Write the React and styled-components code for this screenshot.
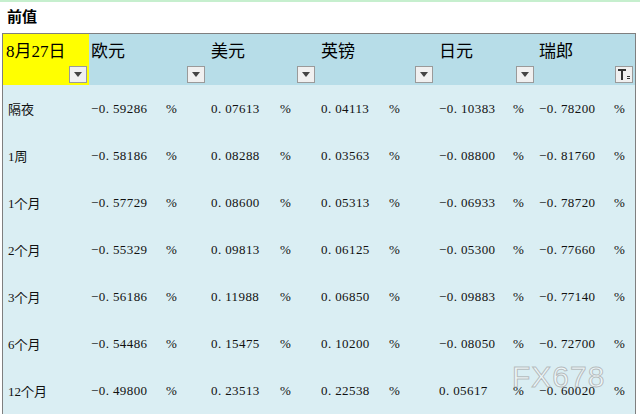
import React from 'react';
import styled, { createGlobalStyle } from 'styled-components';

const Global = createGlobalStyle`
  body { margin: 0; background: #fff; font-family: "Liberation Serif", "Noto Sans CJK JP", serif; }
`;

const Page = styled.div`
  width: 640px;
  height: 414px;
  border-top: 2px solid #c6efce;
  box-sizing: border-box;
  position: relative;
`;

const Title = styled.div`
  height: 31px;
  padding-left: 7px;
  font-size: 15px;
  font-weight: bold;
  line-height: 31px;
  font-family: "Liberation Serif", "Noto Sans CJK SC", serif;
`;

const Table = styled.div`
  margin-left: 2px;
  width: 632px;
  border: 1px solid #7f7f7f;
  display: grid;
  grid-template-columns: 86px 118px 110px 118px 101px 1fr;
  background: #daeef3;
`;

const Head = styled.div`
  height: 51px;
  background: ${p => (p.$first ? '#ffff00' : '#b7dde8')};
  position: relative;
  padding: 3px 0 0 ${p => (p.$first ? 3 : p.$indent || 2)}px;
  box-sizing: border-box;
  font-size: 17px;
  font-family: "Liberation Serif", "Noto Sans CJK JP", serif;
`;

const Drop = styled.div`
  position: absolute;
  right: 2px;
  bottom: 2px;
  width: 16px;
  height: 15px;
  border: 1px solid #9a9a9a;
  background: #f0f0f0;
  display: flex;
  align-items: center;
  justify-content: center;
`;

const Cell = styled.div`
  height: 47px;
  display: flex;
  align-items: center;
  padding-left: ${p => p.$pad || 2}px;
  font-size: 13px;
  font-family: "Liberation Serif", "Noto Sans CJK JP", serif;
  white-space: pre;
  color: #111;
`;

const Num = styled.span`
  width: ${p => p.$w}px;
  letter-spacing: 0.4px;
`;

const Mark = styled.div`
  position: absolute;
  left: 512px;
  top: 358px;
  font-family: "Liberation Sans", sans-serif;
  font-size: 30px;
  color: rgba(255,255,255,0.55);
  -webkit-text-stroke: 1px rgba(150,150,150,0.6);
  letter-spacing: 1px;
`;

const cols = [
  { name: '欧元', indent: 2, w: 75 },
  { name: '美元', indent: 4, w: 69 },
  { name: '英镑', indent: 4, w: 68 },
  { name: '日元', indent: 4, w: 74 },
  { name: '瑞郎', indent: 3, w: 75 },
];

const rows = [
  ['隔夜', '−0. 59286', '0. 07613', '0. 04113', '−0. 10383', '−0. 78200'],
  ['1周', '−0. 58186', '0. 08288', '0. 03563', '−0. 08800', '−0. 81760'],
  ['1个月', '−0. 57729', '0. 08600', '0. 05313', '−0. 06933', '−0. 78720'],
  ['2个月', '−0. 55329', '0. 09813', '0. 06125', '−0. 05300', '−0. 77660'],
  ['3个月', '−0. 56186', '0. 11988', '0. 06850', '−0. 09883', '−0. 77140'],
  ['6个月', '−0. 54486', '0. 15475', '0. 10200', '−0. 08050', '−0. 72700'],
  ['12个月', '−0. 49800', '0. 23513', '0. 22538', '0. 05617', '−0. 60020'],
];

const Arrow = () => (
  <svg width="8" height="5" viewBox="0 0 8 5"><path d="M0 0h8L4 5z" fill="#444" /></svg>
);
const Filter = () => (
  <svg width="12" height="11" viewBox="0 0 12 11">
    <path d="M0 0h8v2H5v9H3V2H0z" fill="#333" />
    <path d="M9 7h3v1H9zM9 9h3v1H9z" fill="#333" />
  </svg>
);

export default function App() {
  return (
    <Page>
      <Global />
      <Title>前值</Title>
      <Table>
        <Head $first>8月27日<Drop><Arrow /></Drop></Head>
        {cols.map((c, i) => (
          <Head key={c.name} $indent={c.indent}>
            {c.name}
            <Drop>{i === cols.length - 1 ? <Filter /> : <Arrow />}</Drop>
          </Head>
        ))}
        {rows.map(r => (
          <React.Fragment key={r[0]}>
            <Cell $pad={5}>{r[0]}</Cell>
            {r.slice(1).map((v, i) => (
              <Cell key={i} $pad={cols[i].indent}>
                <Num $w={cols[i].w}>{v}</Num>%
              </Cell>
            ))}
          </React.Fragment>
        ))}
      </Table>
      <Mark>FX678</Mark>
    </Page>
  );
}
